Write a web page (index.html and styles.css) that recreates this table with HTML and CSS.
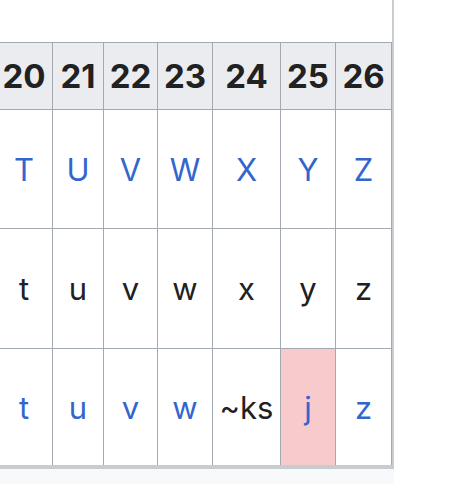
FILE: index.html
```html
<!DOCTYPE html>
<html>
<head>
<meta charset="utf-8">
<link rel="stylesheet" href="styles.css">
</head>
<body>
<div class="frame">
  <div class="wrap">
    <div class="spacer"></div>
    <div class="scroll">
      <table class="grid">
        <tr class="head">
          <th class="w0">20</th>
          <th class="w1">21</th>
          <th class="w2">22</th>
          <th class="w3">23</th>
          <th class="w4">24</th>
          <th class="w5">25</th>
          <th class="w6">26</th>
        </tr>
        <tr class="r1">
          <td><a>T</a></td>
          <td><a>U</a></td>
          <td><a>V</a></td>
          <td><a>W</a></td>
          <td><a>X</a></td>
          <td><a>Y</a></td>
          <td><a>Z</a></td>
        </tr>
        <tr class="r2">
          <td>t</td>
          <td>u</td>
          <td>v</td>
          <td>w</td>
          <td>x</td>
          <td>y</td>
          <td>z</td>
        </tr>
        <tr class="r3">
          <td><a>t</a></td>
          <td><a>u</a></td>
          <td><a>v</a></td>
          <td><a>w</a></td>
          <td>~ks</td>
          <td class="pink"><a>j</a></td>
          <td><a>z</a></td>
        </tr>
      </table>
    </div>
  </div>
  <div class="foot"></div>
</div>
</body>
</html>
```

FILE: styles.css
```css
html, body {
  margin: 0;
  padding: 0;
  background: #ffffff;
}

body {
  font-family: Inter, "Noto Sans", sans-serif;
  color: #202122;
  width: 450px;
  height: 484px;
  overflow: hidden;
}

.frame {
  display: flex;
  flex-direction: column;
  width: 394px;
  height: 484px;
}

.wrap {
  border-right: 2px solid #c8ccd1;
}

.spacer {
  height: 42px;
}

.scroll {
  overflow: hidden;
  border-bottom: 4px solid #c8ccd1;
}

.grid {
  border-collapse: separate;
  border-spacing: 0;
  margin-left: -5px;
  border-top: 1px solid #a2a9b1;
  border-left: 1px solid #a2a9b1;
}

.grid th,
.grid td {
  box-sizing: border-box;
  padding: 0;
  text-align: center;
  vertical-align: middle;
  border-right: 1px solid #a2a9b1;
  border-bottom: 1px solid #a2a9b1;
}

.grid th {
  background: #eaecf0;
  font-weight: 700;
  font-size: 33px;
  height: 67px;
  color: #202122;
}

.grid td {
  font-size: 31px;
  font-weight: 400;
}

.r1 td { height: 119px; }
.r2 td { height: 120px; }
.r3 td { height: 116px; border-bottom: none; }

.grid a {
  color: #3366cc;
  text-decoration: none;
}

.pink {
  background: #f7cbcb;
}

.w0 { width: 57px; }
.w1 { width: 51px; }
.w2 { width: 54px; }
.w3 { width: 55px; }
.w4 { width: 68px; }
.w5 { width: 55px; }
.w6 { width: 56px; }

.foot {
  flex: 1;
  background: #f8f9fa;
}
```
